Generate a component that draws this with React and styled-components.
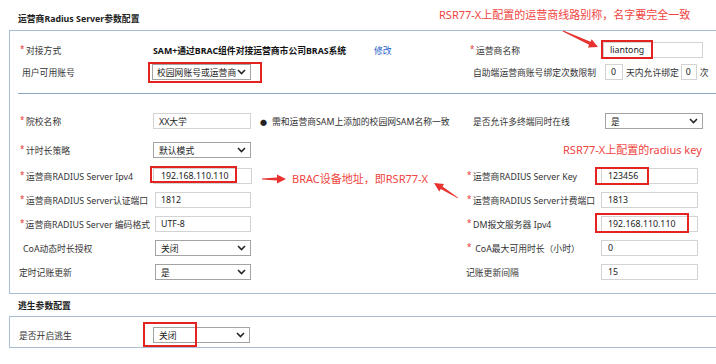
import React from "react";
import styled, { createGlobalStyle } from "styled-components";

const GlobalStyle = createGlobalStyle`
  html, body {
    margin: 0;
    padding: 0;
    background: #fff;
  }
  body {
    font-family: "Noto Sans", "Noto Sans CJK SC", sans-serif;
    font-size: 8.8px;
    color: #333;
  }
`;

const Page = styled.div`
  position: relative;
  width: 716px;
  height: 364px;
  overflow: hidden;
`;

const SectionTitle = styled.div`
  height: ${(p) => p.$h}px;
  padding: ${(p) => p.$top || 0}px 0 0 18px;
  box-sizing: border-box;
  display: flex;
  align-items: center;
  font-weight: bold;
  color: #222;
`;

const Panel = styled.div`
  margin-left: 9px;
  border: 1px solid #a9bed4;
  border-right: none;
`;

const Block = styled.div`
  padding: ${(p) => p.$pt || 0}px 0 ${(p) => p.$pb || 0}px;
`;

const Divider = styled.div`
  margin-left: 8px;
  border-top: 1px solid #8fa9c4;
`;

const Row = styled.div`
  display: grid;
  grid-template-columns: 132px 108px 207px 133px 1fr;
  align-items: center;
  height: ${(p) => p.$h || 24}px;
  margin-top: ${(p) => p.$mt || 0}px;
  padding-left: 8px;
  white-space: nowrap;
`;

const Label = styled.div`
  display: flex;
  align-items: center;
  padding-left: ${(p) => p.$pad || 0}px;
  color: #333;
`;

const Star = styled.span`
  width: 6px;
  color: #e8322f;
  font-size: 8px;
  position: relative;
  top: -2px;
`;

const Cell = styled.div`
  display: flex;
  align-items: center;
  padding-left: ${(p) => p.$pad || 0}px;
  grid-column: ${(p) => p.$span || "auto"};
`;

const Box = styled.div`
  box-sizing: border-box;
  width: ${(p) => p.$w || 97}px;
  height: 16px;
  margin-left: ${(p) => p.$ml || 0}px;
  border: 1px solid ${(p) => (p.$select ? "#a3a3a3" : "#d3d3d3")};
  background: #fff;
  display: flex;
  align-items: center;
  justify-content: space-between;
  padding: 0 ${(p) => (p.$select ? 4 : 5)}px 0 ${(p) => p.$pl ?? 5}px;
  color: #222;
  overflow: hidden;

  svg {
    flex-shrink: 0;
  }
`;

const Strong = styled.span`
  width: 221px;
  font-weight: bold;
  color: #111;
`;

const EditLink = styled.span`
  color: #2461c9;
`;

const Hint = styled.span`
  color: #333;
  &::before {
    content: "●";
    font-size: 7px;
    margin-right: 5px;
    color: #222;
  }
`;

const Inline = styled.span`
  margin: 0 2px 0 3px;
`;

const Note = styled.div`
  position: absolute;
  left: ${(p) => p.$x}px;
  top: ${(p) => p.$y}px;
  font-family: "Noto Sans", "Noto Sans CJK SC", sans-serif;
  font-size: 11px;
  line-height: 14px;
  color: #f0443e;
  white-space: nowrap;
`;

const Mark = styled.div`
  position: absolute;
  left: ${(p) => p.$x}px;
  top: ${(p) => p.$y}px;
  width: ${(p) => p.$w}px;
  height: ${(p) => p.$h}px;
  box-sizing: border-box;
  border: 2px solid #e3231f;
`;

const Overlay = styled.svg`
  position: absolute;
  left: 0;
  top: 0;
  pointer-events: none;
`;

const Chevron = () => (
  <svg width="9" height="6" viewBox="0 0 9 6">
    <polyline points="1,1 4.5,4.6 8,1" fill="none" stroke="#222" strokeWidth="1.5" />
  </svg>
);

const Input = ({ children, ...rest }) => <Box {...rest}>{children}</Box>;

const Select = ({ children, ...rest }) => (
  <Box $select {...rest}>
    <span>{children}</span>
    <Chevron />
  </Box>
);

const Req = ({ children, pad = 2 }) => (
  <Label $pad={pad}>
    <Star>*</Star>
    {children}
  </Label>
);

function arrowPoints([x1, y1], [x2, y2]) {
  const dx = x2 - x1;
  const dy = y2 - y1;
  const len = Math.hypot(dx, dy);
  const ux = dx / len;
  const uy = dy / len;
  const nx = -uy;
  const ny = ux;
  const head = 9;
  const bx = x2 - ux * head;
  const by = y2 - uy * head;
  const p = (x, y) => `${x.toFixed(1)},${y.toFixed(1)}`;
  return [
    p(x1 + nx * 0.4, y1 + ny * 0.4),
    p(bx + nx * 1.6, by + ny * 1.6),
    p(bx + nx * 4.5, by + ny * 4.5),
    p(x2, y2),
    p(bx - nx * 4.5, by - ny * 4.5),
    p(bx - nx * 1.6, by - ny * 1.6),
    p(x1 - nx * 0.4, y1 - ny * 0.4),
  ].join(" ");
}

const arrows = [
  [[563, 31], [598, 47]],
  [[262, 179], [286, 179]],
  [[458, 198], [434, 183]],
];

export default function App() {
  return (
    <Page>
      <GlobalStyle />
      <SectionTitle $h={30} $top={6}>运营商Radius Server参数配置</SectionTitle>
      <Panel>
        <Block $pt={8} $pb={10}>
          <Row $h={22}>
            <Req>对接方式</Req>
            <Cell $span="2 / 4" $pad={3}>
              <Strong>SAM+通过BRAC组件对接运营商市公司BRAS系统</Strong>
              <EditLink>修改</EditLink>
            </Cell>
            <Req pad={5}>运营商名称</Req>
            <Cell>
              <Input $w={100} $ml={5} $pl={6}>liantong</Input>
            </Cell>
          </Row>
          <Row $h={22}>
            <Label $pad={4}>用户可用账号</Label>
            <Cell>
              <Select $w={99} $ml={2} $pl={4}>校园网账号或运营商</Select>
            </Cell>
            <Cell />
            <Label $pad={8}>自助端运营商账号绑定次数限制</Label>
            <Cell>
              <Input $w={18} $ml={7}>0</Input>
              <Inline>天内允许绑定</Inline>
              <Input $w={16} $pl={4}>0</Input>
              <Inline>次</Inline>
            </Cell>
          </Row>
        </Block>
        <Divider />
        <Block $pb={9}>
          <Row $mt={15}>
            <Req>院校名称</Req>
            <Cell>
              <Input $w={98} $ml={3}>XX大学</Input>
            </Cell>
            <Cell $pad={2}>
              <Hint>需和运营商SAM上添加的校园网SAM名称一致</Hint>
            </Cell>
            <Label $pad={8}>是否允许多终端同时在线</Label>
            <Cell>
              <Select $w={98} $ml={7}>是</Select>
            </Cell>
          </Row>
          <Row $mt={5}>
            <Req>计时长策略</Req>
            <Cell>
              <Select $w={98} $ml={3}>默认模式</Select>
            </Cell>
          </Row>
          <Row $mt={2}>
            <Req>运营商RADIUS Server Ipv4</Req>
            <Cell>
              <Input $w={99} $ml={3} $pl={7}>192.168.110.110</Input>
            </Cell>
            <Cell />
            <Req>运营商RADIUS Server Key</Req>
            <Cell>
              <Input $w={97} $ml={3} $pl={6}>123456</Input>
            </Cell>
          </Row>
          <Row>
            <Req>运营商RADIUS Server认证端口</Req>
            <Cell>
              <Input $w={96} $ml={5}>1812</Input>
            </Cell>
            <Cell />
            <Req>运营商RADIUS Server计费端口</Req>
            <Cell>
              <Input $w={97} $ml={3} $pl={6}>1813</Input>
            </Cell>
          </Row>
          <Row>
            <Req>运营商RADIUS Server 编码格式</Req>
            <Cell>
              <Input $w={96} $ml={5}>UTF-8</Input>
            </Cell>
            <Cell />
            <Req>DM报文服务器 Ipv4</Req>
            <Cell>
              <Input $w={97} $ml={3} $pl={6}>192.168.110.110</Input>
            </Cell>
          </Row>
          <Row>
            <Label $pad={5}>CoA动态时长授权</Label>
            <Cell>
              <Select $w={96} $ml={5}>关闭</Select>
            </Cell>
            <Cell />
            <Req>&nbsp;CoA最大可用时长（小时）</Req>
            <Cell>
              <Input $w={97} $ml={3} $pl={6}>0</Input>
            </Cell>
          </Row>
          <Row>
            <Label $pad={1}>定时记账更新</Label>
            <Cell>
              <Select $w={96} $ml={5}>是</Select>
            </Cell>
            <Cell />
            <Label $pad={1}>记账更新间隔</Label>
            <Cell>
              <Input $w={97} $ml={3} $pl={6}>15</Input>
            </Cell>
          </Row>
        </Block>
      </Panel>
      <SectionTitle $h={22}>逃生参数配置</SectionTitle>
      <Panel>
        <Row $mt={6}>
          <Label $pad={1}>是否开启逃生</Label>
          <Cell>
            <Select $w={97} $ml={3}>关闭</Select>
          </Cell>
        </Row>
      </Panel>

      <Note $x={439} $y={8}>RSR77-X上配置的运营商线路别称，名字要完全一致</Note>
      <Note $x={563} $y={143}>RSR77-X上配置的radius key</Note>
      <Note $x={292} $y={172}>BRAC设备地址，即RSR77-X</Note>

      <Mark $x={601} $y={40} $w={52} $h={19} />
      <Mark $x={148} $y={62} $w={114} $h={21} />
      <Mark $x={150} $y={166} $w={87} $h={17} />
      <Mark $x={595} $y={167} $w={54} $h={18} />
      <Mark $x={595} $y={213} $w={94} $h={20} />
      <Mark $x={143} $y={322} $w={54} $h={25} />

      <Overlay width="716" height="364">
        {arrows.map(([a, b], i) => (
          <polygon key={i} points={arrowPoints(a, b)} fill="#e8322f" />
        ))}
      </Overlay>
    </Page>
  );
}
